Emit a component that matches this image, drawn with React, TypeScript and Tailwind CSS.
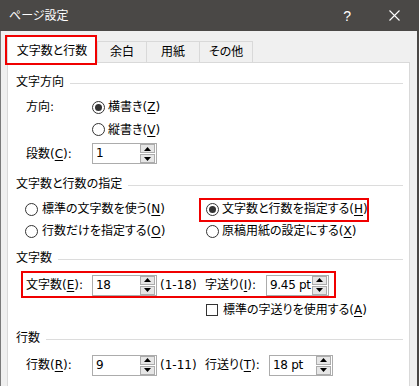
import React from "react";

const U = ({ c }: { c: string }) => (
  <span className="underline underline-offset-[2px] decoration-[1px]">{c}</span>
);

const Radio = ({ checked }: { checked?: boolean }) => (
  <span className="w-[13px] h-[13px] shrink-0 rounded-full border border-[#333333] bg-white flex items-center justify-center">
    {checked && <span className="w-[7px] h-[7px] rounded-full bg-[#333333]" />}
  </span>
);

const Spin = ({ value, w }: { value: string; w: string }) => (
  <div className={`flex h-[21px] ${w} border border-[#acacac] bg-white shrink-0`}>
    <div className="flex-1 min-w-0 pl-[3px] leading-[19px] text-[12px] whitespace-nowrap tracking-[-0.3px]">{value}</div>
    <div className="flex flex-col w-[16px] shrink-0 pr-[1px] gap-[1px]">
      <div className="h-[9px] border border-[#acacac] bg-[#e6e6e6] flex items-center justify-center">
        <svg width="7" height="4" viewBox="0 0 7 4"><polygon points="0,4 7,4 3.5,0" fill="#000" /></svg>
      </div>
      <div className="h-[9px] border border-[#acacac] bg-[#e6e6e6] flex items-center justify-center">
        <svg width="7" height="4" viewBox="0 0 7 4"><polygon points="0,0 7,0 3.5,4" fill="#000" /></svg>
      </div>
    </div>
  </div>
);

const Header = ({ t, className = "" }: { t: string; className?: string }) => (
  <div className={`flex items-center h-[18px] pl-[8px] pr-[6px] gap-[6px] ${className}`}>
    <span>{t}</span>
    <div className="flex-1 h-px bg-[#dcdcdc] mt-[2px]" />
  </div>
);

export default function App() {
  return (
    <div className="w-[419px] h-[386px] overflow-hidden flex flex-col bg-[#f0f0f0] font-['DejaVu_Sans','Noto_Sans_CJK_JP',sans-serif] text-[12px] leading-[16px] text-black whitespace-nowrap [font-feature-settings:'palt']">
      <div className="h-[31px] shrink-0 bg-[#4a4846] flex items-center text-white">
        <span className="pl-[9px] text-[12px]">ページ設定</span>
        <span className="ml-auto text-[14px] font-['Liberation_Sans',sans-serif] mr-[38px]">?</span>
        <svg width="11" height="11" viewBox="0 0 11 11" className="mr-[19px]">
          <path d="M0.5 0.5 L10.5 10.5 M10.5 0.5 L0.5 10.5" stroke="#fff" strokeWidth="1.1" />
        </svg>
      </div>
      <div className="flex-1 flex flex-col border-l border-[#7a7a7a] border-r-2 border-r-[#4a4846] pl-[6px] pr-[7px] pt-[5px]">
        <div className="relative z-10 flex items-end h-[27px] -mb-[1px]">
          <div className="relative w-[90px] h-[27px] bg-white border border-b-0 border-[#d9d9d9] flex justify-center pt-[6px]">
            <span>文字数と行数</span>
            <div className="absolute -left-[3px] -top-[2px] -right-[1px] -bottom-[2px] border-2 border-[#f00000]" />
          </div>
          <div className="w-[50px] h-[21px] mb-[1px] border border-b-0 border-[#d9d9d9] flex items-center justify-center">余白</div>
          <div className="w-[53px] h-[21px] mb-[1px] border border-l-0 border-b-0 border-[#d9d9d9] flex items-center justify-center">用紙</div>
          <div className="w-[53px] h-[21px] mb-[1px] border border-l-0 border-b-0 border-[#d9d9d9] flex items-center justify-center">その他</div>
        </div>
        <div className="flex-1 bg-white border border-b-0 border-[#d9d9d9] flex flex-col">
          <Header t="文字方向" className="mt-[10px]" />
          <div className="flex items-center h-[22px] mt-[5px] pl-[18px]">
            <span className="w-[66px]">方向:</span>
            <Radio checked />
            <span className="ml-[3px]">横書き(<U c="Z" />)</span>
          </div>
          <div className="flex items-center h-[23px] pl-[84px]">
            <Radio />
            <span className="ml-[3px]">縦書き(<U c="V" />)</span>
          </div>
          <div className="flex items-center h-[23px] mt-[1px] pl-[18px]">
            <span className="w-[66px]">段数(<U c="C" />):</span>
            <Spin value="1" w="w-[65px]" />
          </div>

          <Header t="文字数と行数の指定" className="mt-[10px]" />
          <div className="flex items-center h-[22px] mt-[5px] pl-[17px]">
            <div className="w-[181px] flex items-center gap-[4px]">
              <Radio />
              <span>標準の文字数を使う(<U c="N" />)</span>
            </div>
            <div className="relative flex items-center gap-[3px]">
              <Radio checked />
              <span>文字数と行数を指定する(<U c="H" />)</span>
              <div className="absolute left-[-7px] top-[-3px] w-[170px] h-[24px] border-2 border-[#f00000]" />
            </div>
          </div>
          <div className="flex items-center h-[22px] pl-[17px]">
            <div className="w-[181px] flex items-center gap-[4px]">
              <Radio />
              <span>行数だけを指定する(<U c="O" />)</span>
            </div>
            <div className="flex items-center gap-[3px]">
              <Radio />
              <span>原稿用紙の設定にする(<U c="X" />)</span>
            </div>
          </div>

          <Header t="文字数" className="mt-[7px]" />
          <div className="relative flex items-center h-[24px] mt-[6px] pl-[18px]">
            <div className="absolute left-[13px] top-[-2px] w-[315px] h-[27px] border-2 border-[#f00000]" />
            <span className="w-[66px]">文字数(<U c="E" />):</span>
            <Spin value="18" w="w-[65px]" />
            <span className="ml-[3px] w-[45px]">(1-18)</span>
            <span className="w-[61px]">字送り(<U c="I" />):</span>
            <Spin value="9.45 pt" w="w-[63px]" />
          </div>
          <div className="flex items-center h-[22px] mt-[2px] pl-[198px]">
            <span className="w-[12px] h-[12px] border border-[#333333] bg-white shrink-0" />
            <span className="ml-[5px]">標準の字送りを使用する(<U c="A" />)</span>
          </div>

          <Header t="行数" className="mt-[8px]" />
          <div className="flex items-center h-[22px] mt-[7px] pl-[18px]">
            <span className="w-[66px]">行数(<U c="R" />):</span>
            <Spin value="9" w="w-[65px]" />
            <span className="ml-[3px] w-[45px]">(1-11)</span>
            <span className="w-[64px]">行送り(<U c="T" />):</span>
            <Spin value="18 pt" w="w-[64px]" />
          </div>
        </div>
      </div>
    </div>
  );
}
